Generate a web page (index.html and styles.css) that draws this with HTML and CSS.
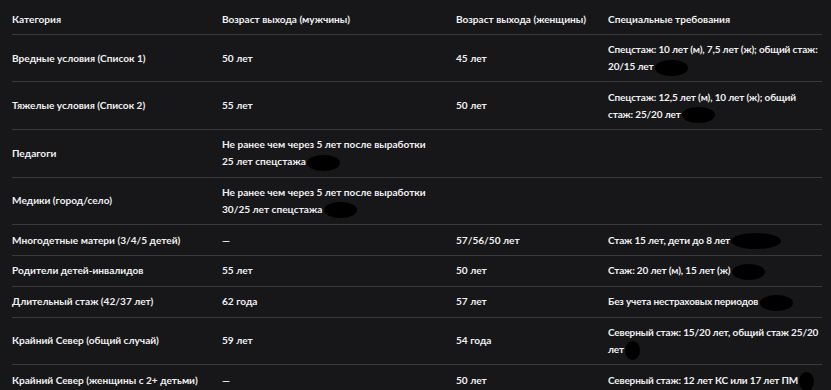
FILE: index.html
```html
<!DOCTYPE html>
<html lang="ru">
<head>
<meta charset="utf-8">
<link rel="stylesheet" href="styles.css">
</head>
<body>
<div class="wrap">
<table class="tbl">
<colgroup>
<col class="c1"><col class="c2"><col class="c3"><col class="c4">
</colgroup>
<thead>
<tr><th>Категория</th><th>Возраст выхода (мужчины)</th><th>Возраст выхода (женщины)</th><th>Специальные требования</th></tr>
</thead>
<tbody>
<tr><td>Вредные условия (Список 1)</td><td>50 лет</td><td>45 лет</td><td class="req">Спецстаж: 10 лет (м), 7,5 лет (ж); общий стаж: 20/15 лет <span class="blot"></span></td></tr>
<tr><td>Тяжелые условия (Список 2)</td><td>55 лет</td><td>50 лет</td><td class="req">Спецстаж: 12,5 лет (м), 10 лет (ж); общий стаж: 25/20 лет <span class="blot"></span></td></tr>
<tr><td>Педагоги</td><td>Не ранее чем через 5 лет после выработки 25 лет спецстажа <span class="blot"></span></td><td></td><td></td></tr>
<tr><td>Медики (город/село)</td><td>Не ранее чем через 5 лет после выработки 30/25 лет спецстажа <span class="blot"></span></td><td></td><td></td></tr>
<tr><td>Многодетные матери (3/4/5 детей)</td><td>—</td><td>57/56/50 лет</td><td class="req">Стаж 15 лет, дети до 8 лет <span class="blot wide"></span></td></tr>
<tr><td>Родители детей-инвалидов</td><td>55 лет</td><td>50 лет</td><td class="req">Стаж: 20 лет (м), 15 лет (ж) <span class="blot"></span></td></tr>
<tr><td>Длительный стаж (42/37 лет)</td><td>62 года</td><td>57 лет</td><td class="req">Без учета нестраховых периодов <span class="blot"></span></td></tr>
<tr><td>Крайний Север (общий случай)</td><td>59 лет</td><td>54 года</td><td class="req">Северный стаж: 15/20 лет, общий стаж 25/20 лет <span class="blot small"></span></td></tr>
<tr><td>Крайний Север (женщины с 2+ детьми)</td><td>—</td><td>50 лет</td><td class="req">Северный стаж: 12 лет КС или 17 лет ПМ <span class="blot small"></span></td></tr>
</tbody>
</table>
</div>
</body>
</html>
```
FILE: styles.css
```css
html, body {
  margin: 0;
  padding: 0;
  background: #171719;
}
body {
  font-family: Lato, "Noto Sans", sans-serif;
  font-size: 10.1px;
  font-weight: 700;
  color: #f0f0f2;
  overflow: hidden;
  height: 390px;
}
.wrap {
  padding: 4px 9px 0 12px;
}
.tbl {
  width: 810px;
  border-collapse: collapse;
  table-layout: fixed;
}
.c1 { width: 210px; }
.c2 { width: 234px; }
.c3 { width: 152px; }
.c4 { width: 214px; }
.tbl th,
.tbl td {
  text-align: left;
  vertical-align: middle;
  padding: 6.5px 12px 6.5px 0;
  line-height: 16.8px;
  border-bottom: 1px solid #3a3a3d;
}
.tbl td:nth-child(2) {
  padding-right: 22px;
}
.tbl th:last-child,
.tbl td:last-child {
  padding-right: 0;
}
.tbl td.req {
  font-size: 10px;
  letter-spacing: -0.15px;
}
.blot {
  display: inline-block;
  width: 33px;
  height: 16px;
  background: #000;
  border-radius: 50%;
  vertical-align: middle;
  margin: -4px 0 -4px -1px;
}
.blot.wide { width: 50px; }
.blot.small { width: 15px; height: 19px; }
```
